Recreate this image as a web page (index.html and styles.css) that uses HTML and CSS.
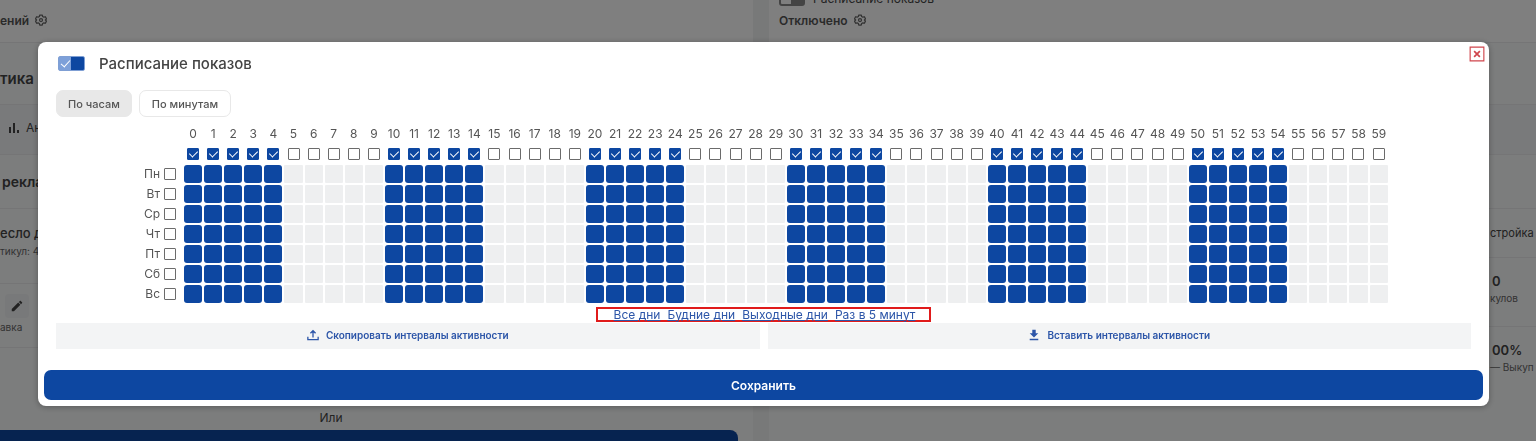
FILE: index.html
```html
<!DOCTYPE html>
<html lang="ru">
<head>
    <meta charset="UTF-8">
    <meta name="viewport" content="width=device-width, initial-scale=1.0">
    <title>Расписание показов</title>
    <link rel="stylesheet" href="styles.css">
</head>
<body>
    <svg class="sprite" aria-hidden="true">
        <symbol id="icon-gear" viewBox="0 0 24 24">
            <path d="M9.500 2h5l.8 3 2.500 1.400 3-.9 2.200 4.300-2.200 2.200 2.200 2.200-2.200 4.300-3-.9-2.500 1.400-.8 3h-5l-.8-3-2.500-1.400-3 .9L1 14.200 3.200 12 1 9.800l2.200-4.300 3 .9L8.700 5z" fill="none" stroke="currentColor" stroke-width="2.500" stroke-linejoin="round"/>
            <circle cx="12" cy="12" r="3" fill="none" stroke="currentColor" stroke-width="2.500"/>
        </symbol>
    </svg>

    <div class="page">
        <div class="column column-left">
            <div class="status"><span>ений</span><svg class="gear"><use href="#icon-gear"/></svg></div>
            <div class="row row-title">тика</div>
            <div class="row row-tab">
                <svg class="bars" viewBox="0 0 12 12"><path d="M2 5v6M6 1v10M10 8v3" stroke="currentColor" stroke-width="2" fill="none"/></svg>
                <span>Ан</span>
            </div>
            <div class="row row-adv">рекла</div>
            <div class="row row-item">
                <b>есло д</b>
                <small>тикул: 4</small>
            </div>
            <div class="row row-rate">
                <span class="edit"><svg viewBox="0 0 24 24"><path d="M3 17.200V21h3.800L17.800 9.900l-3.700-3.700zM20.700 7c.4-.4.4-1 0-1.400l-2.300-2.300c-.4-.4-1-.4-1.400 0l-1.800 1.800 3.700 3.700z" fill="currentColor"/></svg></span>
                <small>авка</small>
            </div>
            <div class="or">Или</div>
            <div class="page-bar"></div>
        </div>
        <div class="column column-right">
            <div class="shows"><span class="shows-switch"></span><span>Расписание показов</span></div>
            <div class="status"><span>Отключено</span><svg class="gear"><use href="#icon-gear"/></svg></div>
            <div class="row row-title"></div>
            <div class="row row-tab"></div>
            <div class="row row-adv"></div>
            <div class="row row-setup"><span>стройка</span></div>
            <div class="row row-stat"><div><b>0</b><small>кулов</small></div></div>
            <div class="row row-stat"><div><b>00%</b><small>— Выкуп</small></div></div>
        </div>
    </div>

    <div class="overlay">
        <div class="modal" role="dialog" aria-labelledby="modal-title">
            <button class="close" aria-label="Закрыть">
                <svg viewBox="0 0 14 14"><path d="M1 1h12v12H1z" fill="none" stroke="currentColor"/><path d="M4.500 4.500l5 5M9.500 4.500l-5 5" fill="none" stroke="currentColor" stroke-width="1.500"/></svg>
            </button>

            <div class="modal-body">
                <div class="modal-header">
                    <input type="checkbox" class="switch" id="schedule" checked>
                    <label for="schedule" id="modal-title">Расписание показов</label>
                </div>

                <div class="tabs">
                    <button class="tab active">По часам</button>
                    <button class="tab">По минутам</button>
                </div>

                <div class="schedule">
                    <table>
                        <thead>
                            <tr id="numbers"><td class="day"></td></tr>
                            <tr id="checks"><td class="day"></td></tr>
                        </thead>
                        <tbody id="days"></tbody>
                    </table>
                </div>

                <div class="presets">
                    <a href="#">Все дни</a>
                    <a href="#">Будние дни</a>
                    <a href="#">Выходные дни</a>
                    <a href="#">Раз в 5 минут</a>
                </div>

                <div class="actions">
                    <button class="action">
                        <svg viewBox="0 0 14 14"><path d="M7 10V2M4 5l3-3 3 3M1 9v3.500h12V9" fill="none" stroke="currentColor" stroke-width="1.500"/></svg>
                        <span>Скопировать интервалы активности</span>
                    </button>
                    <button class="action">
                        <svg viewBox="0 0 14 14"><path d="M5 1h4v4h3L7 10 2 5h3zM2 11.500h10V13H2z" fill="currentColor"/></svg>
                        <span>Вставить интервалы активности</span>
                    </button>
                </div>
            </div>

            <button class="save">Сохранить</button>
        </div>
    </div>

    <script src="script.js"></script>
</body>
</html>
```
FILE: styles.css
```css
* {
    margin: 0;
    padding: 0;
    box-sizing: border-box;
}

html, body {
    height: 100%;
    overflow: hidden;
}

body {
    font-family: Inter, 'Liberation Sans', sans-serif;
    font-size: 12px;
    color: #444;
    background-color: #f4f6f8;
}

button {
    font-family: inherit;
    border: none;
    cursor: pointer;
}

.sprite {
    display: none;
}

/* page behind the modal */
.page {
    height: 100%;
    display: grid;
    grid-template-columns: 1fr 1fr;
    gap: 16px;
    background-color: #f1f2f3;
    overflow: hidden;
}

.column {
    background-color: #f9fafb;
}

.column-left {
    margin-right: 7px;
}

.column-right {
    margin-left: -7px;
}

.status {
    height: 42px;
    display: flex;
    align-items: center;
    gap: 6px;
    font-weight: 600;
    color: #555;
    background-color: #fff;
}

.column-left .status {
    padding-bottom: 2px;
}

.column-right .status {
    height: 36px;
    padding: 0 0 8px 10px;
}

.gear {
    width: 12px;
    height: 12px;
    color: #666;
}

.shows {
    height: 6px;
    padding-left: 10px;
    display: flex;
    align-items: flex-end;
    gap: 8px;
    background-color: #fff;
}

.shows span {
    line-height: 14px;
}

.shows-switch {
    width: 26px;
    height: 14px;
    border: 2px solid #888;
    border-right-width: 14px;
    border-radius: 3px;
}

.row {
    border-top: 1px solid #eaebed;
    display: flex;
    align-items: center;
}

.row b, .row small {
    display: block;
    white-space: nowrap;
}

.row small {
    font-size: 10px;
    line-height: 18px;
    color: #666;
}

.row-title {
    height: 62px;
    padding-top: 10px;
    font-size: 15px;
    font-weight: 600;
}

.row-tab {
    height: 50px;
    padding: 0 0 4px 8px;
    gap: 6px;
    background-color: #f3f4f6;
}

.bars {
    width: 12px;
    height: 12px;
}

.row-adv {
    height: 54px;
    padding-left: 2px;
    font-size: 14px;
    font-weight: 600;
}

.row-item {
    height: 75px;
    padding-bottom: 8px;
    flex-direction: column;
    align-items: flex-start;
    justify-content: center;
}

.row-item b {
    font-size: 13px;
    font-weight: 500;
    line-height: 18px;
}

.row-rate {
    height: 64px;
    padding-bottom: 2px;
    flex-direction: column;
    align-items: flex-start;
    justify-content: center;
}

.edit {
    width: 24px;
    height: 24px;
    margin-left: 5px;
    display: flex;
    align-items: center;
    justify-content: center;
    border-radius: 4px;
    background-color: #f0f2f4;
}

.edit svg {
    width: 14px;
    height: 14px;
}

.or {
    height: 83px;
    margin-left: -91px;
    padding-bottom: 5px;
    display: flex;
    align-items: flex-end;
    justify-content: center;
    border-top: 1px solid #eaebed;
}

.page-bar {
    height: 30px;
    margin-right: 15px;
    border-radius: 0 8px 0 0;
    background-color: #0d47a1;
}

.row-setup, .row-stat {
    justify-content: flex-end;
}

.row-setup {
    height: 49px;
    font-size: 11px;
}

.row-setup span, .row-stat div {
    width: 46px;
}

.row-stat {
    height: 69px;
    padding-bottom: 4px;
}

.row-stat b {
    font-size: 13px;
    font-weight: 600;
    padding-left: 2px;
}

/* modal */
.overlay {
    position: fixed;
    inset: 0;
    padding: 42px 47px 0 38px;
    background-color: rgba(0, 0, 0, 0.5);
}

.modal {
    position: relative;
    padding: 6px;
    border-radius: 8px;
    background-color: #fff;
    box-shadow: 0 1px 6px rgba(0, 0, 0, 0.3);
}

.close {
    position: absolute;
    top: 4px;
    right: 4px;
    width: 16px;
    height: 16px;
    color: #d0454c;
    background-color: #fff;
}

.close svg {
    display: block;
    width: 16px;
    height: 16px;
}

.modal-body {
    padding: 0 12px;
}

.modal-header {
    height: 30px;
    padding-left: 2px;
    display: flex;
    align-items: center;
    gap: 14px;
    font-size: 15px;
    font-weight: 500;
}

.switch {
    appearance: none;
    position: relative;
    width: 27px;
    height: 15px;
    border-radius: 2px;
    border: 1px solid #7f9fd4;
    background: linear-gradient(90deg, #7da0d9 48%, #0d47a1 48%);
}

.switch::after {
    content: "";
    position: absolute;
    left: 4px;
    top: 1px;
    width: 4px;
    height: 8px;
    border: solid #fff;
    border-width: 0 1px 1px 0;
    transform: rotate(42deg);
}

.tabs {
    margin-top: 12px;
    display: flex;
    gap: 7px;
}

.tab {
    height: 27px;
    padding: 0 12px;
    font-size: 11px;
    font-weight: 500;
    color: #555;
    border: 1px solid #e8e8e8;
    border-radius: 7px;
    background-color: #fff;
}

.tab.active {
    padding: 0 11px;
    background-color: #e8e8e8;
}

.schedule {
    margin-top: 7px;
    padding: 0 82px 0 84px;
}

.schedule table {
    width: 100%;
    table-layout: fixed;
    border-collapse: collapse;
}

.schedule th, .schedule td {
    height: 20px;
    padding: 1px;
    font-weight: 400;
    text-align: center;
    vertical-align: middle;
}

.schedule thead th {
    padding: 0;
}

.schedule .day {
    width: 43px;
    padding: 0 7px 0 0;
}

.schedule label {
    display: flex;
    align-items: center;
    justify-content: center;
    font-size: 12px;
    line-height: 18px;
    color: #555;
}

.schedule .day label {
    justify-content: flex-end;
    gap: 4px;
}

.check {
    appearance: none;
    position: relative;
    display: block;
    flex-shrink: 0;
    width: 12px;
    height: 12px;
    margin: 0 auto;
    border: 1px solid #6b6b6b;
    border-radius: 1px;
    background-color: #fff;
}

.day .check {
    margin: 0;
}

.check:checked {
    border-color: #0d47a1;
    background-color: #0d47a1;
}

.check:checked::after {
    content: "";
    position: absolute;
    left: 3px;
    top: 0;
    width: 4px;
    height: 7px;
    border: solid #fff;
    border-width: 0 1px 1px 0;
    transform: rotate(45deg);
}

.cell {
    display: block;
    height: 18px;
    border-radius: 1px;
    background-color: #eeeff0;
}

.cell.on {
    border-radius: 3px;
    background-color: #0d47a1;
}

.presets {
    width: fit-content;
    height: 15px;
    margin: 3px auto 1px;
    padding: 0 14px 0 16px;
    display: flex;
    align-items: center;
    gap: 7px;
    border: 2px solid #e01b1b;
}

.presets a {
    font-size: 12px;
    line-height: 14px;
    color: #2c55a8;
    white-space: nowrap;
}

.actions {
    display: grid;
    grid-template-columns: 1fr 1fr;
    gap: 8px;
}

.action {
    height: 26px;
    padding-bottom: 2px;
    display: flex;
    align-items: center;
    justify-content: center;
    gap: 7px;
    font-size: 10px;
    font-weight: 600;
    color: #2c55a8;
    background-color: #f3f4f5;
}

.action svg {
    width: 12px;
    height: 12px;
}

.save {
    width: 100%;
    height: 30px;
    margin-top: 21px;
    font-size: 12px;
    font-weight: 600;
    color: #fff;
    border-radius: 7px;
    background-color: #0d47a1;
}
```
FILE: script.js
```js
const days = ['Пн', 'Вт', 'Ср', 'Чт', 'Пт', 'Сб', 'Вс'];
const numbers = document.getElementById('numbers');
const checks = document.getElementById('checks');

function isOn(minute) {
    return minute % 10 < 5;
}

for (let m = 0; m < 60; m++) {
    const checked = isOn(m) ? 'checked' : '';
    numbers.insertAdjacentHTML('beforeend', `<th scope="col"><label for="m${m}">${m}</label></th>`);
    checks.insertAdjacentHTML('beforeend', `<td><input type="checkbox" class="check" id="m${m}" ${checked}></td>`);
}

days.forEach((day, i) => {
    let html = `<th scope="row" class="day"><label>${day}<input type="checkbox" class="check" id="d${i}"></label></th>`;
    for (let m = 0; m < 60; m++) {
        html += `<td><span class="cell${isOn(m) ? ' on' : ''}"></span></td>`;
    }
    document.getElementById('days').insertAdjacentHTML('beforeend', `<tr>${html}</tr>`);
});
```
